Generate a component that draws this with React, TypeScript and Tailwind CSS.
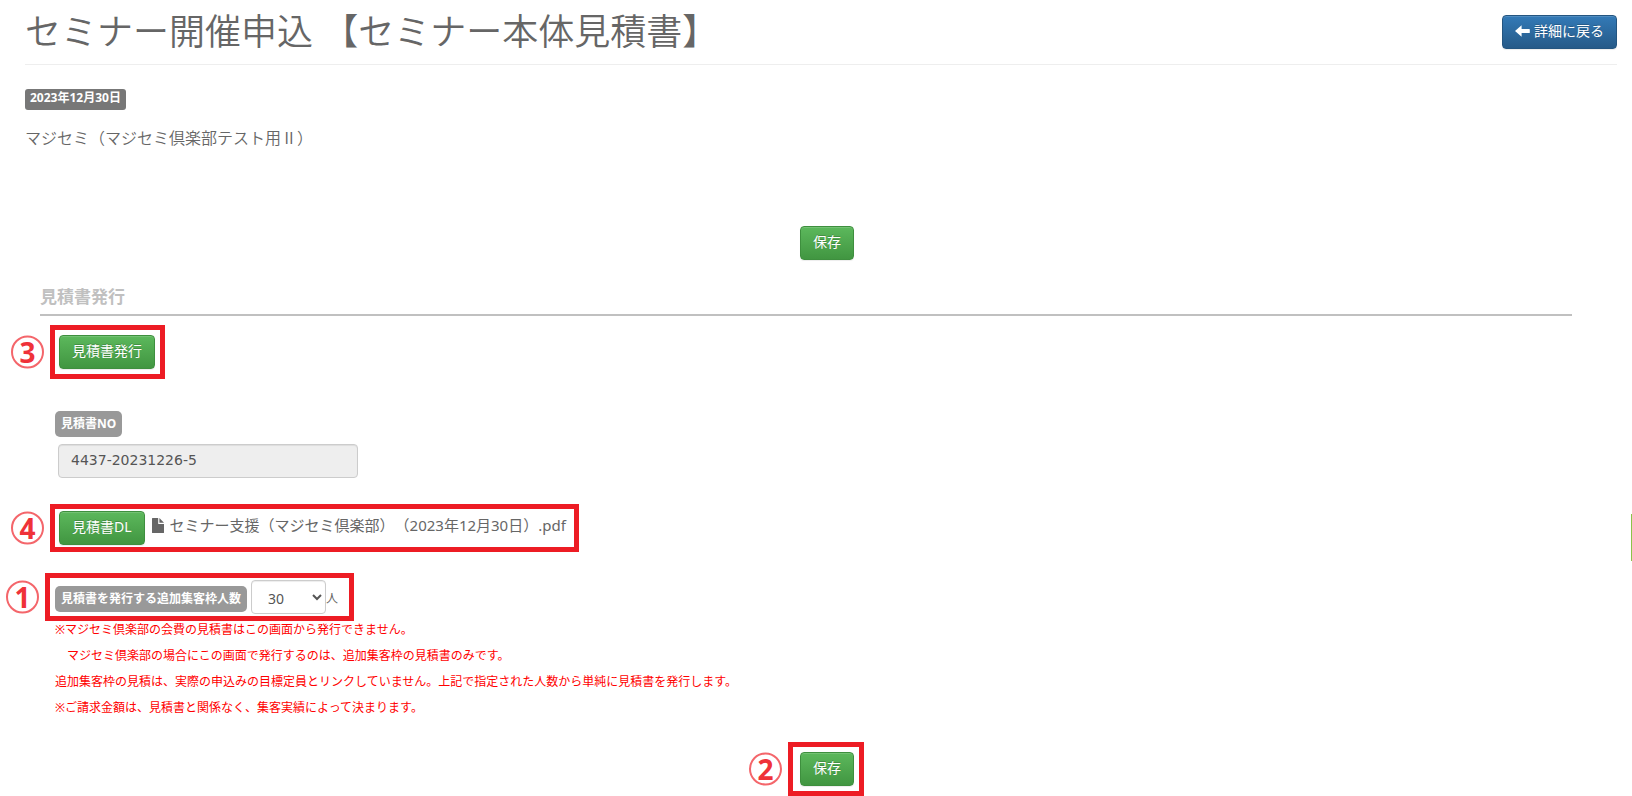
import type { ReactNode } from "react";
import clsx from "clsx";

const notes = [
  "※マジセミ倶楽部の会費の見積書はこの画面から発行できません。",
  "　マジセミ倶楽部の場合にこの画面で発行するのは、追加集客枠の見積書のみです。",
  "追加集客枠の見積は、実際の申込みの目標定員とリンクしていません。上記で指定された人数から単純に見積書を発行します。",
  "※ご請求金額は、見積書と関係なく、集客実績によって決まります。",
];

const seatOptions = [10, 20, 30, 40, 50];

interface ButtonProps {
  variant?: "success" | "primary";
  children: ReactNode;
}

function Button({ variant = "success", children }: ButtonProps) {
  return (
    <button
      type="button"
      className={clsx(
        "flex h-[34px] shrink-0 items-center gap-1 rounded border bg-linear-to-b px-3 pb-[3px] text-sm text-white",
        "[text-shadow:0_-1px_0_rgba(0,0,0,0.2)] shadow-[inset_0_1px_0_rgba(255,255,255,0.15),0_1px_1px_rgba(0,0,0,0.075)]",
        variant === "success" && "border-[#3e8f3e] from-[#5cb85c] to-[#419641]",
        variant === "primary" && "border-[#245580] from-[#337ab7] to-[#265a88]"
      )}
    >
      {children}
    </button>
  );
}

interface StepProps {
  number: number;
  frame: string;
  children: ReactNode;
}

// Red frame with a circled step number, laid over the control it points at
function Step({ number, frame, children }: StepProps) {
  return (
    <div className="relative flex w-fit">
      {children}
      <div className={clsx("pointer-events-none absolute border-5 border-[#ed1c24]", frame)}>
        <span className="absolute top-1/2 right-full mr-[11px] flex size-[33px] -translate-y-1/2 items-center justify-center rounded-full border-2 border-[#f4666b] pb-[2px] text-[28px] leading-none font-bold text-[#ef3239]">
          {number}
        </span>
      </div>
    </div>
  );
}

function ArrowLeftIcon() {
  return (
    <svg viewBox="0 0 15 12" className="h-3 w-[15px] fill-current" aria-hidden="true">
      <path d="M0 6 6.6 0.2V4H14.2Q14.8 4 14.8 4.6V7.4Q14.8 8 14.2 8H6.6V11.8Z" />
    </svg>
  );
}

function FileIcon() {
  return (
    <svg viewBox="0 0 12 15" className="h-[15px] w-3 fill-current" aria-hidden="true">
      <path d="M0.6 0H6.2V5.4Q6.2 6 6.8 6H12V14.4Q12 15 11.4 15H0.6Q0 15 0 14.4V0.6Q0 0 0.6 0Z" />
      <path d="M7.4 0 12 4.8H7.4Z" />
    </svg>
  );
}

export default function App() {
  return (
    <div className="pr-[15px] pb-[10px] pl-[25px] font-['Noto_Sans','Noto_Sans_CJK_JP',sans-serif] text-[#666] [text-spacing-trim:space-all]">
      <header className="flex items-start justify-between border-b border-[#eee] py-[15px]">
        <h1 className="text-[36px] leading-[34px] font-[350]">セミナー開催申込 【セミナー本体見積書】</h1>
        <Button variant="primary">
          <ArrowLeftIcon />
          詳細に戻る
        </Button>
      </header>

      <div className="mt-6 flex h-[21px] w-fit items-center rounded-[3px] bg-[#777] px-[5px] pb-[3px] text-xs font-bold text-white">
        2023年12月30日
      </div>
      <p className="mt-4 text-base leading-6 font-[350]">マジセミ（マジセミ倶楽部テスト用Ⅱ）</p>

      <form className="mt-[76px] mr-[3px] ml-[15px]">
        <div className="flex justify-center">
          <Button>保存</Button>
        </div>

        <section className="mt-6 mr-[42px]">
          <h2 className="border-b-2 border-[#c0c0c0] pt-px pb-[5px] text-[17px] leading-6 font-bold text-[#c0c0c0]">
            見積書発行
          </h2>
          <div className="px-[15px] pt-[19px]">
            <div className="ml-1">
              <Step number={3} frame="-inset-y-[10px] -left-[9px] -right-[10px]">
                <Button>見積書発行</Button>
              </Step>
            </div>

            <label
              htmlFor="estimate-no"
              className="mt-[42px] flex h-[26px] w-fit items-center rounded-[5px] bg-[#999] px-[6px] text-xs font-bold text-white"
            >
              見積書NO
            </label>
            <input
              id="estimate-no"
              readOnly
              value="4437-20231226-5"
              className="mt-[7px] ml-[3px] block h-[34px] w-[300px] rounded border border-[#ccc] bg-[#eee] px-3 pb-[2px] font-['DejaVu_Sans',sans-serif] text-sm text-[#555] shadow-[inset_0_1px_1px_rgba(0,0,0,0.075)]"
            />

            <div className="mt-[33px] ml-1">
              <Step number={4} frame="-inset-x-[9px] -inset-y-[7px]">
                <div className="flex items-center gap-[7px] pr-1">
                  <Button>見積書DL</Button>
                  <a href="#" className="flex items-center gap-[6px] pb-[5px] text-[15px]">
                    <FileIcon />
                    セミナー支援（マジセミ倶楽部）（2023年12月30日）.pdf
                  </a>
                </div>
              </Step>
            </div>

            <div className="mt-[35px]">
              <Step number={1} frame="-inset-x-[10px] -inset-y-[7px]">
                <div className="flex items-center pr-[6px]">
                  <label
                    htmlFor="seats"
                    className="mt-[3px] flex h-[26px] items-center rounded-[5px] bg-[#999] px-[6px] text-xs font-bold text-white"
                  >
                    見積書を発行する追加集客枠人数
                  </label>
                  <select
                    id="seats"
                    defaultValue={30}
                    className="ml-1 h-[34px] w-[75px] rounded border border-[#ccc] bg-white px-3 pt-[2px] text-sm text-[#555] shadow-[inset_0_1px_1px_rgba(0,0,0,0.075)]"
                  >
                    {seatOptions.map((count) => (
                      <option key={count} value={count}>
                        {count}
                      </option>
                    ))}
                  </select>
                  <span className="pt-1 text-xs">人</span>
                </div>
              </Step>
            </div>

            <div className="mt-[3px] text-xs leading-[26px] text-[#f00]">
              {notes.map((note) => (
                <p key={note}>{note}</p>
              ))}
            </div>
          </div>
        </section>

        <div className="mt-[31px] flex justify-center">
          <Step number={2} frame="-inset-y-[10px] -left-[12px] -right-[10px]">
            <Button>保存</Button>
          </Step>
        </div>
      </form>

      <div className="fixed top-[514px] right-0 h-[47px] w-px bg-[#8bc34a]" />
    </div>
  );
}
